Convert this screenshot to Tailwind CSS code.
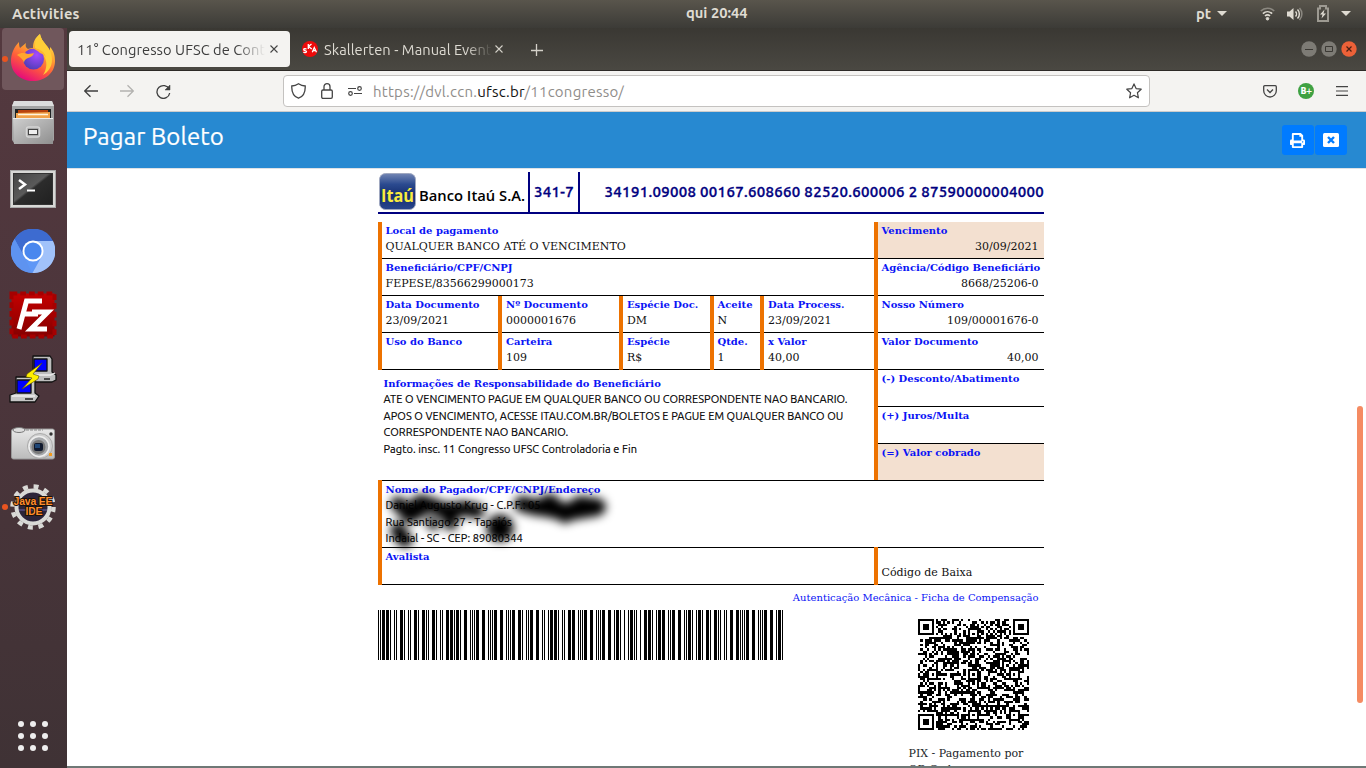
<!DOCTYPE html>
<html lang="pt-BR">
<head>
<meta charset="utf-8">
<title>Pagar Boleto</title>
<script src="https://cdn.jsdelivr.net/npm/@tailwindcss/browser@4"></script>
</head>
<body class="w-[1366px] h-[768px] overflow-hidden bg-white font-['Ubuntu','Noto_Sans',sans-serif] flex flex-col">

<!-- System bar -->
<header class="h-7 shrink-0 relative flex items-center justify-between bg-linear-to-b from-[#59554c] to-[#3c3b37] text-[#dfdbd2] font-bold text-[14.670px] pl-3 pr-[15px]">
  <span class="tracking-[0.250px]">Activities</span>
  <span class="absolute left-[686px] top-[4px] leading-[18px]">qui 20:44</span>
  <div class="flex items-center h-7">
    <span class="text-[14.670px]">pt</span>
    <svg class="ml-[6px]" width="10" height="6"><path d="M0 0h10L5 5z" fill="#dfdbd2"/></svg>
    <svg class="ml-[33px]" width="15" height="14" viewBox="0 0 15 14" fill="none" stroke="#dfdbd2" stroke-width="1.7"><path d="M.8 4C4.500.3 10.500.3 14.200 4" stroke="#8b8880"/><path d="M2.900 6.600c2.700-2.500 6.500-2.500 9.200 0M5 9c1.500-1.400 3.500-1.400 5 0"/><circle cx="7.500" cy="11.700" r="1.300" fill="#dfdbd2" stroke-width="1"/></svg>
    <svg class="ml-[12px]" width="16" height="14" viewBox="0 0 16 14" fill="none" stroke="#dfdbd2" stroke-width="1.500"><path d="M0 4.500h2.500L6.500 1v12L2.500 9.500H0z" fill="#dfdbd2" stroke="none"/><path d="M8.500 4.500c1.300 1.300 1.300 3.700 0 5M10.500 2.500c2.500 2.500 2.500 6.500 0 9"/><path d="M12.500 1c3.200 3.500 3.200 8.500 0 12" stroke="#8b8880"/></svg>
    <svg class="ml-[14px] -mt-[2px]" width="12" height="17" viewBox="0 0 12 17"><path d="M1 3.500h2V1h6v2.500h2V16H1z" fill="none" stroke="#9d9a92" stroke-width="2"/><path d="M7.500 4.500L3 9.500h2.500L4.500 13.500 9 8.500H6.500z" fill="#dfdbd2"/></svg>
    <svg class="ml-[12px]" width="10" height="6"><path d="M0 0h10L5 5z" fill="#dfdbd2"/></svg>
  </div>
</header>

<div class="flex flex-1 min-h-0">
<!-- Dock -->
<aside class="w-[67px] shrink-0 relative bg-linear-to-b from-[#54393f] via-[#4b353b] to-[#3f3235] flex flex-col items-center pr-[2px]">
  <div class="w-[62px] h-[62px] rounded-[4px] bg-[#70575c] flex items-center justify-center">
    <svg class="-mt-[3px]" width="46" height="47" viewBox="0 0 46 47">
      <defs><linearGradient id="ff" x1=".8" y1="0" x2=".3" y2="1"><stop offset="0" stop-color="#fff44f"/><stop offset=".35" stop-color="#ffa930"/><stop offset=".65" stop-color="#ff5a3c"/><stop offset="1" stop-color="#e3067f"/></linearGradient>
      <radialGradient id="fp" cx=".65" cy=".3" r=".8"><stop offset="0" stop-color="#a54bff"/><stop offset="1" stop-color="#4a3cb3"/></radialGradient></defs>
      <path d="M9 8c0 2 0 4 1 6l6-5c-1 3 0 5 2 6 2-1 4-1 5-1 0-6 2-10 7-14 1 5 3 7 6 11 2 2 3 4 4 6v-4c4 4 5 9 5 14 0 12-10 20-22 20S1 39 1 27c0-7 3-14 8-19z" fill="url(#ff)"/>
      <path d="M25 14c0-6 1-10 5-14 1 5 3 7 6 11 3 3 6 8 6 15 0 7-4 12-9 15 4-6 5-14 0-20-2-3-5-5-8-7z" fill="#ffce38"/>
      <circle cx="23.500" cy="25" r="10.500" fill="url(#fp)"/>
      <path d="M7 21c4-3 8-2 11-1 3 0 5-1 6-1-1 3-3 4-6 5-3 1-4 3-4 5-1-4-4-6-7-8z" fill="#ffa62e"/>
      <path d="M22 14c7 0 14 4 14 11 0-3-3-5-6-6-2-2-5-4-8-5z" fill="#ffb52e"/>
    </svg>
  </div>
  <i class="absolute left-[2px] top-[28px] size-[6px] rounded-full bg-[#e95420]"></i>
  <!-- Files -->
  <svg class="mt-[10px]" width="44" height="46" viewBox="0 0 44 46"><defs><linearGradient id="g" x2="1" y2="1"><stop stop-color="#cfcfcf"/><stop offset="1" stop-color="#8f8f8f"/></linearGradient></defs><path d="M3 1h38l2 5v34l-2 3H3l-2-3V6z" fill="#a3a3a3"/><path d="M3 1h38l2 5H1z" fill="#dcdcdc"/><path d="M4 9h36v11H4z" fill="#1f2224"/><path d="M7 10h30v8H7z" fill="#b8430e"/><path d="M5 13l34-1v7H5z" fill="#f1a24a"/><path d="M7 14.500h30" stroke="#fff4df" stroke-width="1.500"/><path d="M2 18h40v26H3z" fill="url(#g)"/><path d="M2 18.500h40" stroke="#eee"/><rect x="15.500" y="27" width="13" height="10" rx="2" fill="#aaa" stroke="#d5d5d5" stroke-width="1.500"/><rect x="17.500" y="29.500" width="9" height="5" fill="#eee" stroke="#444"/></svg>
  <!-- Terminal -->
  <svg class="mt-[24px]" width="46" height="38" viewBox="0 0 46 38"><defs><linearGradient id="t" x2="1" y2="1"><stop stop-color="#444"/><stop offset=".45" stop-color="#5a5a5a"/><stop offset=".5" stop-color="#2c2c2c"/><stop offset="1" stop-color="#202020"/></linearGradient></defs><rect x=".5" y=".5" width="45" height="37" fill="#d8d8d6" stroke="#a9a9a9"/><rect x="3.500" y="3.500" width="39" height="31" fill="url(#t)" stroke="#333"/><path d="M9 10l6 4.500L9 19" fill="none" stroke="#fff" stroke-width="2.500"/><path d="M17 20.500h8" stroke="#fff" stroke-width="2"/></svg>
  <!-- Chromium -->
  <svg class="mt-[21px]" width="44" height="44" viewBox="0 0 44 44"><circle cx="22" cy="22" r="22" fill="#5e97f6"/><path d="M3.500 10A22 22 0 0 1 42 12H22L12.500 27z" fill="#3d6bd0"/><path d="M42 12a22 22 0 0 1-20.500 32L31 27 22 12z" fill="#a1c2fa"/><path d="M3.500 10L13 27l8 17A22 22 0 0 1 3.500 10z" fill="#5e93f0"/><circle cx="22" cy="22" r="10.500" fill="#fff"/><circle cx="22" cy="22" r="8.600" fill="#4a87ee"/></svg>
  <!-- FileZilla -->
  <svg class="mt-[18px]" width="48" height="48" viewBox="0 0 48 48"><defs><linearGradient id="z" y2="1" x2="0"><stop stop-color="#c40000"/><stop offset="1" stop-color="#850000"/></linearGradient></defs><rect x="2.500" y="2.500" width="43" height="43" fill="url(#z)"/><rect x="2.500" y="2.500" width="43" height="43" fill="none" stroke="#a50000" stroke-width="4" stroke-dasharray="5.750 3"/><path d="M33 10H17.500L10 38M14.500 23H29M23 21h16L22 38h16" fill="none" stroke="#fff" stroke-width="5"/></svg>
  <!-- PuTTY -->
  <svg class="mt-[16px]" width="48" height="48" viewBox="0 0 48 48" stroke="#111" stroke-width="1.300" stroke-linejoin="round"><path d="M24 1h17l2 3v13l4 3v5l-4 2H20v-5l4-5z" fill="#bdbdbd"/><path d="M25 4h13v12H25z" fill="#00f"/><path d="M20 20h22l4-2" fill="none" stroke="#eee"/><path d="M7 22h17l2 3v13l4 3-4 6H1v-7l6-2z" fill="#c6c6c6"/><path d="M8 25h14v13H8z" fill="#00f"/><path d="M3 41h23" stroke="#eee" stroke-width="1.500"/><path d="M16 44h8M35 24h6" stroke="#222" stroke-width="1.500"/><path d="M33 8L18 19l-1 3 6 1-10 11 16-10 1-3-6-2z" fill="#ffef00" stroke="#554d00" stroke-width=".6"/></svg>
  <!-- Camera -->
  <svg class="mt-[24px]" width="46" height="34" viewBox="0 0 46 34"><defs><linearGradient id="c" y2="1" x2="0"><stop stop-color="#e8e8e8"/><stop offset="1" stop-color="#bbb"/></linearGradient></defs><rect x="1.500" y="2" width="43" height="30" rx="2" fill="url(#c)" stroke="#999"/><ellipse cx="9" cy="3" rx="6" ry="2.500" fill="#ddd" stroke="#777"/><path d="M16 3h17" stroke="#888" stroke-dasharray="3 1"/><circle cx="30" cy="19" r="12.500" fill="#cfcfcf" stroke="#aaa"/><circle cx="29" cy="19.500" r="10" fill="#a7a9ac" stroke="#eee" stroke-width="1.500"/><circle cx="28.500" cy="20" r="7" fill="#777" /><rect x="24" y="16" width="9" height="8" rx="2" fill="#10192e"/><path d="M25 17h5v4h-5z" fill="#1f4676"/><circle cx="41" cy="7" r="1.700" fill="#333"/><path d="M39 26h3v3h-3z" fill="#f39a1d"/></svg>
  <!-- Java EE IDE -->
  <svg class="mt-[23px]" width="46" height="46" viewBox="-23 -23 46 46"><circle r="20.500" fill="none" stroke="#d9d9d6" stroke-width="4.500" stroke-dasharray="5 5.730"/><circle r="16.500" fill="#2c2439" stroke="#d9d9d6" stroke-width="4"/><path d="M-14 3h28" stroke="#4c4370" stroke-width="2"/><g font-family="Liberation Sans" font-weight="bold" font-size="10.500" text-anchor="middle" fill="#ff8c2a" stroke="#1a120a" stroke-width="1.800" paint-order="stroke"><text y="-2" textLength="39">Java EE</text><text x="1" y="8" textLength="17">IDE</text></g></svg>
  <i class="absolute left-[2px] top-[476px] size-[6px] rounded-full bg-[#e95420]"></i>
  <div class="mt-auto mb-[17px] grid grid-cols-3 gap-[6px]">
    <i class="size-[6px] rounded-full bg-[#eee]"></i><i class="size-[6px] rounded-full bg-[#eee]"></i><i class="size-[6px] rounded-full bg-[#eee]"></i>
    <i class="size-[6px] rounded-full bg-[#eee]"></i><i class="size-[6px] rounded-full bg-[#eee]"></i><i class="size-[6px] rounded-full bg-[#eee]"></i>
    <i class="size-[6px] rounded-full bg-[#eee]"></i><i class="size-[6px] rounded-full bg-[#eee]"></i><i class="size-[6px] rounded-full bg-[#eee]"></i>
  </div>
</aside>

<!-- Browser window -->
<section class="flex-1 min-w-0 flex flex-col">
  <div class="h-[43px] shrink-0 bg-linear-to-b from-[#3a3833] to-[#4a4842] border-b border-[#2d2a27] flex items-start pt-[3px] pl-[2px] pr-[9px] text-[14.670px]">
    <div class="w-[221px] h-9 rounded-[4px] bg-[#f4f3f1] text-[#3d3d3d] flex items-center pl-[8px]">
      <span class="w-[188px] mt-[2px] overflow-hidden whitespace-nowrap tracking-[0.060px] mask-r-from-85%">11° Congresso UFSC de Controladoria</span>
      <svg class="ml-[5px]" width="8" height="8" stroke="#444" stroke-width="1.100"><path d="M.5.500l7 7M7.500.500l-7 7"/></svg>
    </div>
    <div class="h-9 flex items-center text-[#dedbd3] pl-[12px]">
      <svg width="16" height="16" viewBox="0 0 16 16"><circle cx="8" cy="8" r="8" fill="#ee0a0a"/><g fill="none" stroke="#fff" stroke-width="1.300"><path d="M4.500 8.200c-1-.8-3-.6-2.800.6.200 1 2.900.5 2.800 1.800-.1 1.200-2.200 1.300-3.100.4M6.300 3v5M9.500 3L6.500 5.500 9.800 8M10.300 11.300L12.300 6.500l2.200 4.800M11 9.700h2.700"/></g></svg>
      <span class="ml-[6px] mt-[2px] w-[168px] overflow-hidden whitespace-nowrap tracking-[0.060px] mask-r-from-85%">Skallerten - Manual Eventos</span>
      <svg class="ml-[3px]" width="8" height="8" stroke="#d4d1c9" stroke-width="1.100"><path d="M.5.500l7 7M7.500.500l-7 7"/></svg>
      <svg class="ml-[28px] mt-px" width="12" height="12" stroke="#d4d1c9" stroke-width="1.300"><path d="M5.500 0v12M0 6.500h12"/></svg>
    </div>
    <div class="ml-auto mt-[10px] flex gap-[4px]">
      <svg width="16" height="16"><circle cx="8" cy="8" r="7.700" fill="#7d7b75"/><path d="M4 8.500h8" stroke="#3b3934"/></svg>
      <svg width="16" height="16"><circle cx="8" cy="8" r="7.700" fill="#7d7b75"/><path d="M4.500 5.500h7v5h-7z" fill="none" stroke="#3b3934"/></svg>
      <svg width="16" height="16"><circle cx="8" cy="8" r="7.700" fill="#ec6138"/><path d="M5.500 5.500l5 5M10.500 5.500l-5 5" stroke="#4a2014" stroke-width="1.200"/></svg>
    </div>
  </div>
  <div class="h-[41px] shrink-0 bg-[#f4f3f1] border-b border-[#ccc] flex items-center pl-[17px] pr-[17px]">
    <svg width="14" height="14" viewBox="0 0 14 14" fill="none" stroke="#3f3f3f" stroke-width="1.300"><path d="M14 7H.7M6.500 1.200L.7 7l5.800 5.800"/></svg>
    <svg class="ml-[22px]" width="14" height="14" viewBox="0 0 14 14" fill="none" stroke="#b3b2b0" stroke-width="1.300"><path d="M0 7h13.300M7.500 1.200L13.300 7l-5.800 5.800"/></svg>
    <svg class="ml-[22px]" width="15" height="15" viewBox="0 0 15 15" fill="none" stroke="#3f3f3f" stroke-width="1.300"><path d="M13.200 5.300A6.400 6.400 0 1 0 13.700 9"/><path d="M14 1v5H9z" fill="#3f3f3f" stroke-width=".5"/></svg>
    <div class="ml-[112px] w-[867px] h-8 bg-white border border-[#c4c2c0] rounded-[4px] flex items-center pl-[7px] pr-[7px]">
      <svg width="15" height="16" viewBox="0 0 15 16" fill="none" stroke="#444" stroke-width="1.300"><path d="M7.500.8C5.500 2.200 3 3 .8 3c-.3 6 1.700 10.500 6.700 12.200C12.500 13.500 14.500 9 14.200 3 12 3 9.500 2.200 7.500.8z"/></svg>
      <svg class="ml-[15px]" width="12" height="16" viewBox="0 0 12 16" fill="none" stroke="#444" stroke-width="1.300"><rect x=".7" y="7" width="10.600" height="8.300" rx="1.300"/><path d="M3 7V3.700a3 3 0 0 1 6 0V7"/></svg>
      <svg class="ml-[15px]" width="14" height="10" viewBox="0 0 14 10" fill="none" stroke="#444" stroke-width="1.200"><path d="M0 2.500h8M6 7.500h8"/><circle cx="11.500" cy="2.500" r="1.800"/><circle cx="2.500" cy="7.500" r="1.800"/></svg>
      <span class="ml-[11px] mt-[2px] text-[15px] tracking-[0.250px] text-[#8f8d8a] whitespace-nowrap">https://dvl.ccn.<span class="text-[#111]">ufsc.br</span>/11congresso/</span>
      <svg class="ml-auto" width="16" height="16" viewBox="0 0 16 16" fill="none" stroke="#444" stroke-width="1.200" stroke-linejoin="round"><path d="M8 .9l2.100 4.700 5.100.6-3.800 3.500 1 5.100L8 12.300l-4.400 2.500 1-5.100L.8 6.200l5.100-.6z"/></svg>
    </div>
    <svg class="ml-auto mr-[21px]" width="14" height="13" viewBox="0 0 14 13" fill="none" stroke="#444" stroke-width="1.300"><path d="M1.700.7h10.600a1 1 0 0 1 1 1v4a6.300 6.300 0 0 1-12.600 0v-4a1 1 0 0 1 1-1z"/><path d="M4 4.500l3 3 3-3"/></svg>
    <svg width="16" height="16"><circle cx="8" cy="8" r="8" fill="#3fa142"/><text x="2.500" y="11.200" fill="#fff" font-family="DejaVu Sans" font-weight="bold" font-size="8" textLength="12">B+</text></svg>
    <svg class="ml-[22px] mr-[1px]" width="12" height="10" stroke="#444" stroke-width="1.200"><path d="M0 .6h12M0 5h12M0 9.400h12"/></svg>
  </div>

  <div class="h-[57px] shrink-0 bg-[#2789d1] border-b border-[#dee2e6] flex justify-between pl-4 pr-[19px] text-white">
    <h1 class="text-[24px] leading-[36px] mt-[7px] tracking-[0.130px] [-webkit-text-stroke:0.200px]">Pagar Boleto</h1>
    <div class="flex gap-[1px] mt-[13px]">
      <button class="w-8 h-[30px] rounded-[3px] bg-[#007bff] flex items-center justify-center"><svg class="-ml-px" width="15" height="15" viewBox="0 0 16 16" fill="#fff"><path fill-rule="evenodd" d="M2 1a1 1 0 0 1 1-1h8.500L14 2.500V7h.500A1.500 1.500 0 0 1 16 8.500V12a.7.7 0 0 1-.7.700H14V15a1 1 0 0 1-1 1H3a1 1 0 0 1-1-1v-2.300H.700A.7.7 0 0 1 0 12V8.500A1.500 1.500 0 0 1 1.500 7H2zM4 2v6h8V4h-2V2zm0 9v3h8v-3zm9.500-2.200a.7.7 0 1 0 .01 0z"/></svg></button>
      <button class="w-8 h-[30px] rounded-[3px] bg-[#007bff] flex items-center justify-center"><svg width="16" height="14" viewBox="0 0 16 14"><rect width="16" height="14" rx="1.500" fill="#fff"/><path d="M5 4l6 6M11 4l-6 6" stroke="#007bff" stroke-width="2.400"/></svg></button>
    </div>
  </div>

  <main class="flex-1 min-h-0 relative bg-white pl-[311px] pt-[3px] overflow-hidden border-b-2 border-[#6f7876]">
   <div class="w-[666px]">
    <div class="h-[42px] border-b-2 border-[#000080] flex">
      <div class="w-[150px] flex items-start shrink-0">
        <svg class="mt-[1px] ml-[1px]" width="37" height="37"><defs><linearGradient id="it" y2="1" x2="0"><stop stop-color="#7386b4"/><stop offset=".3" stop-color="#2b4a8f"/><stop offset=".6" stop-color="#152e70"/><stop offset="1" stop-color="#27458c"/></linearGradient></defs><rect x=".5" y=".5" width="36" height="36" rx="6" fill="url(#it)" stroke="#a0a8c0"/><text x="2" y="29" font-family="Open Sans" font-weight="bold" font-size="18" fill="#f8ec3e" textLength="33" lengthAdjust="spacingAndGlyphs">Itaú</text></svg>
        <svg class="mt-[9px] ml-[3px]" width="108" height="28"><text x="0" y="20" font-family="Open Sans" font-weight="600" font-size="14.500" textLength="106" lengthAdjust="spacingAndGlyphs">Banco Itaú S.A.</text></svg>
      </div>
      <div class="w-[52px] shrink-0 border-x-2 border-[#000080] text-[#000080] font-medium text-[15px] leading-[40px] text-center tracking-[0.300px] [-webkit-text-stroke:0.350px]">341-7</div>
      <div class="flex-1 text-right text-[#000080] font-medium text-[15px] leading-[40px] whitespace-nowrap tracking-[0.310px] [-webkit-text-stroke:0.350px]">34191.09008 00167.608660 82520.600006 2 87590000004000</div>
    </div>

    <div class="mt-[8px] flex font-['DejaVu_Serif',serif] text-[11px] leading-[18px] text-[#111]">
      <div class="w-[496px] shrink-0">
        <div class="border-l-4 border-[#ed7200]">
          <div class="h-[37px] border-b border-black pl-[3.500px] pt-px"><b class="block text-[10px] leading-[15px] text-[#0a14f5]">Local de pagamento</b>QUALQUER BANCO ATÉ O VENCIMENTO</div>
          <div class="h-[37px] border-b border-black pl-[3.500px] pt-px"><b class="block text-[10px] leading-[15px] text-[#0a14f5]">Beneficiário/CPF/CNPJ</b>FEPESE/83566299000173</div>
          <div class="grid grid-cols-[116px_121px_91px_50px_114px]">
            <div class="h-[37px] border-b border-black pl-[3.500px] pt-px"><b class="block text-[10px] leading-[15px] text-[#0a14f5]">Data Documento</b>23/09/2021</div>
            <div class="border-l-4 border-[#ed7200]"><div class="h-[37px] border-b border-black pl-1 pt-px"><b class="block text-[10px] leading-[15px] text-[#0a14f5]">Nº Documento</b>0000001676</div></div>
            <div class="border-l-4 border-[#ed7200]"><div class="h-[37px] border-b border-black pl-1 pt-px"><b class="block text-[10px] leading-[15px] text-[#0a14f5]">Espécie Doc.</b>DM</div></div>
            <div class="border-l-4 border-[#ed7200]"><div class="h-[37px] border-b border-black pl-[3.500px] pt-px"><b class="block text-[10px] leading-[15px] text-[#0a14f5]">Aceite</b>N</div></div>
            <div class="border-l-4 border-[#ed7200]"><div class="h-[37px] border-b border-black pl-1 pt-px"><b class="block text-[10px] leading-[15px] text-[#0a14f5]">Data Process.</b>23/09/2021</div></div>
            <div class="h-[37px] border-b border-black pl-[3.500px] pt-px"><b class="block text-[10px] leading-[15px] text-[#0a14f5]">Uso do Banco</b></div>
            <div class="border-l-4 border-[#ed7200]"><div class="h-[37px] border-b border-black pl-1 pt-px"><b class="block text-[10px] leading-[15px] text-[#0a14f5]">Carteira</b>109</div></div>
            <div class="border-l-4 border-[#ed7200]"><div class="h-[37px] border-b border-black pl-1 pt-px"><b class="block text-[10px] leading-[15px] text-[#0a14f5]">Espécie</b>R$</div></div>
            <div class="border-l-4 border-[#ed7200]"><div class="h-[37px] border-b border-black pl-[3.500px] pt-px"><b class="block text-[10px] leading-[15px] text-[#0a14f5]">Qtde.</b>1</div></div>
            <div class="border-l-4 border-[#ed7200]"><div class="h-[37px] border-b border-black pl-1 pt-px"><b class="block text-[10px] leading-[15px] text-[#0a14f5]">x Valor</b>40,00</div></div>
          </div>
        </div>
        <div class="h-[110px] pl-[5.500px] pt-[6px]">
          <b class="block text-[10px] leading-[15px] text-[#0a14f5]">Informações de Responsabilidade do Beneficiário</b>
          <div class="font-['Ubuntu','Noto_Sans',sans-serif] text-[11px] leading-[16.500px] whitespace-nowrap tracking-[0.060px] text-black [-webkit-text-stroke:0.150px]">
            <p>ATE O VENCIMENTO PAGUE EM QUALQUER BANCO OU CORRESPONDENTE NAO BANCARIO.</p>
            <p>APOS O VENCIMENTO, ACESSE ITAU.COM.BR/BOLETOS E PAGUE EM QUALQUER BANCO OU</p>
            <p>CORRESPONDENTE NAO BANCARIO.</p>
            <p>Pagto. insc. 11 Congresso UFSC Controladoria e Fin</p>
          </div>
        </div>
      </div>
      <div class="flex-1 min-w-0 border-l-4 border-[#ed7200]">
        <div class="h-[37px] border-b border-black bg-[#f3e0d0] pl-[3.500px] pr-[5.500px] pt-px text-right"><b class="block text-left text-[10px] leading-[15px] text-[#0a14f5]">Vencimento</b>30/09/2021</div>
        <div class="h-[37px] border-b border-black pl-[3.500px] pr-[5.500px] pt-px text-right"><b class="block text-left whitespace-nowrap text-[10px] leading-[15px] text-[#0a14f5]">Agência/Código Beneficiário</b>8668/25206-0</div>
        <div class="h-[37px] border-b border-black pl-[3.500px] pr-[5.500px] pt-px text-right"><b class="block text-left text-[10px] leading-[15px] text-[#0a14f5]">Nosso Número</b>109/00001676-0</div>
        <div class="h-[37px] border-b border-black pl-[3.500px] pr-[5.500px] pt-px text-right"><b class="block text-left text-[10px] leading-[15px] text-[#0a14f5]">Valor Documento</b>40,00</div>
        <div class="h-[37px] border-b border-black pl-[3.500px] pt-px"><b class="block text-[10px] leading-[15px] text-[#0a14f5]">(-) Desconto/Abatimento</b></div>
        <div class="h-[37px] border-b border-black pl-[3.500px] pt-px"><b class="block text-[10px] leading-[15px] text-[#0a14f5]">(+) Juros/Multa</b></div>
        <div class="h-[36px] bg-[#f3e0d0] pl-[3.500px] pt-px"><b class="block text-[10px] leading-[15px] text-[#0a14f5]">(=) Valor cobrado</b></div>
      </div>
    </div>

    <div class="relative border-l-4 border-[#ed7200] font-['DejaVu_Serif',serif] text-[11px] leading-[16px] text-[#111]">
      <div class="h-[67px] border-t border-black pl-[3.500px] pt-px">
        <b class="block text-[10px] leading-[15px] text-[#0a14f5]">Nome do Pagador/CPF/CNPJ/Endereço</b>
        <div class="font-['Ubuntu','Noto_Sans',sans-serif] text-[11px] leading-[16.500px] whitespace-nowrap tracking-[0.060px] text-black [-webkit-text-stroke:0.150px]">
          <p>Daniel Augusto Krug - C.P.F.: 05</p>
          <p>Rua Santiago 27 - Tapajós</p>
          <p>Indaial - SC - CEP: 89080344</p>
        </div>
      </div>
      <!-- Brush marks covering the payer's personal data -->
      <svg class="absolute left-[-4px] top-0" width="260" height="90" viewBox="378 480 260 90">
        <defs><filter id="b" x="-30%" y="-60%" width="160%" height="220%"><feGaussianBlur stdDeviation="4.800"/></filter></defs>
        <g filter="url(#b)" fill="none" stroke="#000" stroke-linecap="round" stroke-linejoin="round">
          <path d="M398 504L410 514 420 502 434 506 448 513 462 508 477 511" stroke-width="15"/>
          <path d="M410 513L420 507M449 512L450 514" stroke-width="20"/>
          <path d="M431 523L434 525M449 525L452 525" stroke-width="10"/>
          <path d="M398 530L399 533L405 540" stroke-width="15"/>
          <path d="M500 528h.1" stroke-width="27"/>
          <path d="M522 504L538 508 550 502 565 515 580 504 598 507" stroke-width="16"/>
          <path d="M542 507L566 512 596 507" stroke-width="18"/>
        </g>
      </svg>
    </div>
    <div class="flex font-['DejaVu_Serif',serif] text-[11px] leading-[18px] text-[#111]">
      <div class="w-[496px] shrink-0 border-l-4 border-[#ed7200]"><div class="h-[38px] border-y border-black pl-[3.500px] pt-px"><b class="block text-[10px] leading-[15px] text-[#0a14f5]">Avalista</b></div></div>
      <div class="flex-1 border-l-4 border-[#ed7200]"><div class="h-[38px] border-y border-black pl-[3.500px] pt-[16px]">Código de Baixa</div></div>
    </div>
    <p class="font-['DejaVu_Serif',serif] text-[10px] leading-[15px] text-right pr-[5.500px] pt-[5px] text-[#0a14f5]">Autenticação Mecânica - Ficha de Compensação</p>
    <div class="flex justify-between mt-[5px] font-['DejaVu_Serif',serif]">
      <svg id="barcode" width="405" height="50" shape-rendering="crispEdges"></svg>
      <div class="w-[135.500px] pt-[9px]">
        <svg id="qr" class="ml-[9.500px]" width="111" height="111" viewBox="0 0 49 49" shape-rendering="crispEdges"></svg>
        <p class="mt-[16px] text-[11px] leading-[16px] text-[#212529]">PIX - Pagamento por<br>QR Code</p>
      </div>
    </div>
   </div>
   <i class="absolute left-[1290px] top-[237px] w-[6px] h-[297px] rounded-full bg-[#f58b62]"></i>
  </main>
</section>
</div>

<script>
// Interleaved 2 of 5
(() => {
  const code = "34192875900000040001090000167608668252060000";
  const W = ["00110","10001","01001","11000","00101","10100","01100","00011","10010","01010"];
  let x = 0, d = "";
  const put = (bar, w) => { if (bar) d += `M${x} 0h${w}v50h-${w}z`; x += w; };
  [1,0,1,0].forEach(b => put(b, 1));
  for (let i = 0; i < code.length; i += 2)
    for (let k = 0; k < 5; k++) {
      put(1, W[code[i]][k] === "1" ? 3 : 1);
      put(0, W[code[i + 1]][k] === "1" ? 3 : 1);
    }
  put(1, 3); put(0, 1); put(1, 1);
  document.getElementById("barcode").innerHTML = `<path d="${d}"/>`;
})();
// QR symbol, version 8 grid
(() => {
  const n = 49, m = [];
  let s = 20210923;
  const rnd = () => (s = (s * 1103515245 + 12345) % 2147483648) / 2147483648;
  for (let y = 0; y < n; y++) { m[y] = []; for (let x = 0; x < n; x++) m[y][x] = rnd() < .5; }
  for (let i = 8; i < n - 8; i++) { m[6][i] = m[i][6] = i % 2 === 0; }
  const square = (cx, cy, r, on) => {
    for (let y = -r; y <= r; y++) for (let x = -r; x <= r; x++)
      if (m[cy + y] && cx + x >= 0 && cx + x < n) m[cy + y][cx + x] = on(Math.max(Math.abs(x), Math.abs(y)));
  };
  [[3,3],[45,3],[3,45]].forEach(([x, y]) => square(x, y, 4, q => q === 3 || q < 2));
  [[24,6],[6,24],[24,24],[42,24],[24,42],[42,42]].forEach(([x, y]) => square(x, y, 2, q => q !== 1));
  let d = "";
  m.forEach((r, y) => r.forEach((v, x) => { if (v) d += `M${x} ${y}h1v1h-1z`; }));
  document.getElementById("qr").innerHTML = `<path d="${d}"/>`;
})();
</script>
</body>
</html>
